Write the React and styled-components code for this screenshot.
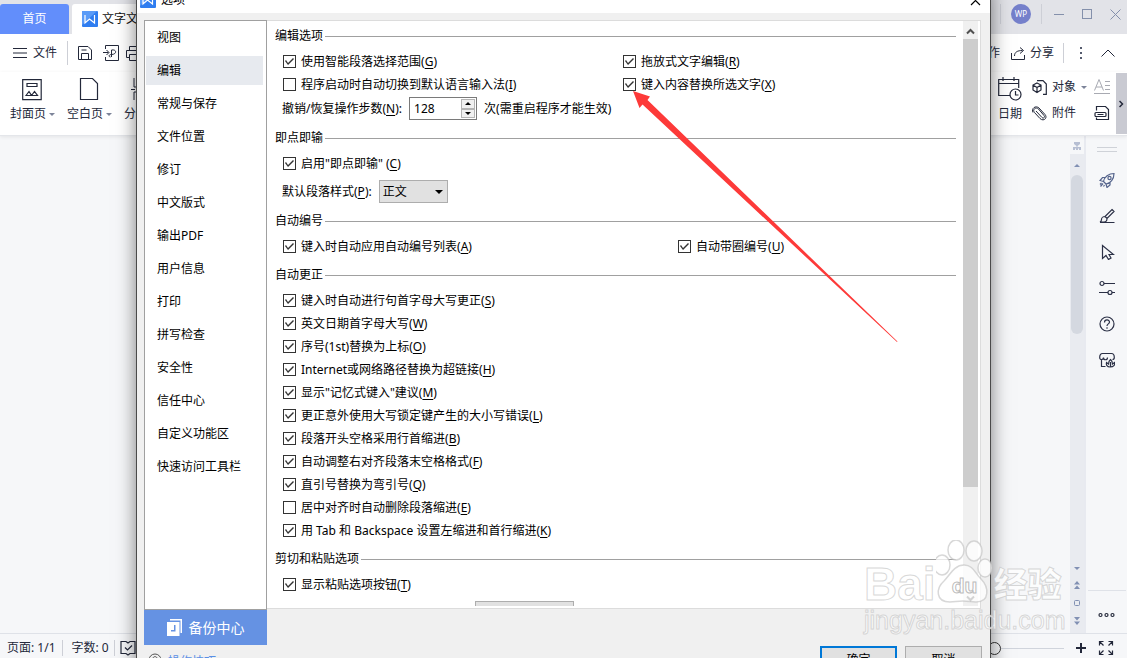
import React, { useState } from 'react';
import styled, { createGlobalStyle } from 'styled-components';

const GlobalStyle = createGlobalStyle`
  * {
    box-sizing: border-box;
  }

  body {
    margin: 0;
    overflow: hidden;
    font-family: 'Noto Sans', 'Noto Sans CJK SC', sans-serif;
    font-size: 12px;
    line-height: 18px;
    color: #23283a;
  }

  button, input, select {
    font: inherit;
    color: inherit;
    margin: 0;
  }

  svg {
    display: block;
    flex: none;
  }
`;

// Editor window
const Window = styled.div`
  position: relative;
  display: flex;
  flex-direction: column;
  height: 100vh;
  overflow: hidden;
  background: #f6f7f9;
`;

const TitleBar = styled.header`
  display: flex;
  justify-content: space-between;
  height: 34px;
  flex: none;
  background: #e2e3e8;
`;

const Tabs = styled.div`
  display: flex;
  align-items: flex-end;
  gap: 3px;
`;

const Tab = styled.button`
  display: flex;
  align-items: center;
  justify-content: center;
  gap: 4px;
  height: 30px;
  min-width: 69px;
  padding: 0 10px;
  border: none;
  border-radius: 3px 3px 0 0;
  white-space: nowrap;
  background: ${props => props.$home ? '#628efb' : '#fff'};
  color: ${props => props.$home ? '#fff' : '#111'};
`;

const WindowControls = styled.div`
  display: flex;
  align-items: center;
  height: 28px;
  margin-right: -2px;
`;

const Divider = styled.span`
  width: 1px;
  height: ${props => props.$h || 20}px;
  background: ${props => props.$color || '#cdcfd6'};
`;

const Avatar = styled.button`
  width: 20px;
  height: 20px;
  margin: 0 10px;
  padding: 0;
  border: none;
  border-radius: 50%;
  background: #7580cb;
  color: #fff;
  font-size: 8px;
  line-height: 20px;
`;

const IconButton = styled.button`
  display: flex;
  align-items: center;
  justify-content: center;
  width: ${props => props.$w || 28}px;
  height: ${props => props.$h || 24}px;
  padding: 0;
  border: none;
  background: none;
  color: ${props => props.$color || 'inherit'};
`;

const MenuBar = styled.div`
  display: flex;
  align-items: center;
  justify-content: space-between;
  height: 38px;
  flex: none;
  background: #fff;
`;

const MenuGroup = styled.div`
  display: flex;
  align-items: center;
  padding-left: ${props => props.$pad || 0}px;
`;

const TextButton = styled.button`
  display: flex;
  align-items: center;
  gap: ${props => props.$gap || 5}px;
  padding: 0;
  border: none;
  background: none;
  white-space: nowrap;
`;

const Ribbon = styled.div`
  display: flex;
  justify-content: space-between;
  height: 64px;
  flex: none;
  background: #fff;
  border-bottom: 1px solid #e4e6ea;
  box-shadow: 0 1px 4px rgba(0, 0, 0, 0.08);
  z-index: 1;
`;

const RibbonGroup = styled.div`
  display: flex;
  align-items: flex-start;
  padding-left: ${props => props.$pad || 0}px;
`;

const BigTool = styled.button`
  display: flex;
  flex-direction: column;
  align-items: center;
  width: ${props => props.$w || 57}px;
  padding: 4px 0 0;
  gap: 3px;
  border: none;
  background: none;
  white-space: nowrap;

  > svg {
    margin-right: ${props => props.$w ? 0 : 2}px;
  }

  > span {
    display: flex;
    align-items: center;
    gap: 3px;
  }
`;

const Caret = styled.span`
  border: 3px solid transparent;
  border-top-color: #7d8499;
  border-bottom: none;
`;

const ToolStack = styled.div`
  display: flex;
  flex-direction: column;
  gap: 8px;
  padding-top: 6px;
  width: ${props => props.$w}px;
`;

const RibbonScroll = styled.button`
  display: flex;
  align-items: center;
  justify-content: center;
  width: 11px;
  height: 61px;
  margin-top: 1px;
  padding: 0;
  border: none;
  background: #c9cad2;
`;

const Workspace = styled.main`
  display: flex;
  justify-content: flex-end;
  flex: 1;
  min-height: 0;
`;

const PageScroll = styled.div`
  display: flex;
  flex-direction: column;
  align-items: center;
  width: 14px;
  background: linear-gradient(#f6f7f9 18px, #e9ebf0 18px);
  padding-bottom: 3px;
`;

const PageThumb = styled.div`
  width: 12px;
  height: 159px;
  margin-top: 1px;
  border-radius: 6px;
  background: #d4d8e0;
`;

const Spacer = styled.div`
  flex: 1;
`;

const SideBar = styled.aside`
  display: flex;
  flex-direction: column;
  align-items: center;
  width: 43px;
  border-left: 2px solid #e8eaf0;
`;

const Grip = styled.div`
  width: 20px;
  height: 5px;
  margin: 11px 0 10px;
  border: solid #cfd2d8;
  border-width: 1px 0;
`;

const SideMore = styled.div`
  display: flex;
  justify-content: center;
  width: 38px;
  height: 43px;
  padding-top: 12px;
  border-top: 1px solid #dfe2e8;
`;

const StatusBar = styled.footer`
  display: flex;
  justify-content: space-between;
  height: 25px;
  flex: none;
  padding-top: 4px;
  border-top: 1px solid #dfe2e8;
  background: #f6f7f9;
`;

const StatusGroup = styled.div`
  display: flex;
  align-items: center;
  height: 20px;
  padding-left: ${props => props.$pad || 0}px;
  gap: ${props => props.$gap || 0}px;
  white-space: nowrap;
`;

const ZoomSlider = styled.input`
  appearance: none;
  width: 139px;
  height: 14px;
  background: linear-gradient(#d0d4dc, #d0d4dc) center / 100% 1px no-repeat;

  &::-webkit-slider-thumb {
    appearance: none;
    width: 13px;
    height: 13px;
    border: 1px solid #333;
    border-radius: 50%;
    background: #f6f7f9;
  }
`;

// Options dialog
const Dialog = styled.section`
  position: absolute;
  z-index: 2;
  top: -14px;
  bottom: -31px;
  left: 136px;
  right: 136px;
  display: flex;
  flex-direction: column;
  border: 1px solid #4a4a4a;
  background: #f0f0f0;
  box-shadow: 0 2px 18px rgba(0, 0, 0, 0.5);
  color: #000;
`;

const DialogTitle = styled.div`
  display: flex;
  align-items: center;
  gap: 5px;
  height: 26px;
  flex: none;
  padding: 0 8px 0 3px;
  background: #fff;
`;

const DialogBody = styled.div`
  display: flex;
  flex: 1;
  min-height: 0;
  padding: 7px 9px 0 7px;
`;

const LeftColumn = styled.div`
  display: flex;
  flex-direction: column;
  width: 123px;
  flex: none;
`;

const Nav = styled.nav`
  display: flex;
  flex-direction: column;
  gap: 4px;
  flex: 1;
  padding: 2px 3px 0 1px;
  border: 1px solid #a0a0a0;
  background: #fff;
`;

const NavItem = styled.button`
  height: 29px;
  padding: 0 11px;
  border: none;
  text-align: left;
  background: ${props => props.$active ? '#e7eaef' : 'transparent'};
`;

const BackupButton = styled.button`
  display: flex;
  align-items: center;
  justify-content: center;
  gap: 6px;
  height: 35px;
  padding: 0;
  border: none;
  background: #6592e3;
  color: #fff;
  font-size: 14px;
`;

const TipsLink = styled.a`
  display: flex;
  gap: 6px;
  height: 43px;
  padding: 8px 0 0 4px;
  color: #5a8fe6;
  text-decoration: none;
`;

const RightColumn = styled.div`
  display: flex;
  flex-direction: column;
  flex: 1;
  min-width: 0;
`;

const Panel = styled.div`
  display: flex;
  flex: 1;
  min-height: 0;
  padding: 0 2px 2px 0;
  border: 1px solid #dcdcdc;
  border-left: none;
  background: #fff;
`;

const Options = styled.div`
  display: flex;
  flex-direction: column;
  gap: 8px;
  flex: 1;
  min-width: 0;
  overflow: hidden;
  padding: 6px 7px 0 8px;
`;

const Group = styled.section`
  display: flex;
  flex-direction: column;
  flex: none;
`;

const GroupTitle = styled.h3`
  display: flex;
  align-items: center;
  gap: 2px;
  height: 18px;
  margin: 0 0 5px;
  font-size: 12px;
  font-weight: 400;
  line-height: 20px;

  &::after {
    content: '';
    flex: 1;
    height: 1px;
    background: #a0a0a0;
  }
`;

const OptionGrid = styled.div`
  display: grid;
  grid-template-columns: ${props => props.$split ? `${props.$split}px 1fr` : '1fr'};
  padding-left: 8px;
`;

const OptionLabel = styled.label`
  display: flex;
  align-items: center;
  gap: 5px;
  height: 23px;
  white-space: nowrap;
`;

const Key = styled.u`
  text-underline-offset: 2px;
`;

const CheckBox = styled.input`
  appearance: none;
  width: 13px;
  height: 13px;
  flex: none;
  border: 1px solid #333;
  background: #fff;

  &:checked::before {
    content: '';
    display: block;
    width: 11px;
    height: 11px;
    background: #333;
    clip-path: polygon(1px 5px, 2px 4px, 4px 7px, 9px 2px, 10px 3px, 4px 9px);
  }
`;

const FieldRow = styled.div`
  display: flex;
  align-items: center;
  height: 23px;
  margin: ${props => props.$top}px 0 1px 7px;
  gap: 7px;
  white-space: nowrap;
`;

const SpinBox = styled.div`
  display: flex;
  width: 68px;
  height: 23px;
  padding: 1px;
  border: 1px solid #7a7a7a;
  background: #fff;

  input {
    flex: 1;
    min-width: 0;
    padding: 0 3px;
    border: none;
    outline: none;
  }
`;

const SpinButtons = styled.div`
  display: flex;
  flex-direction: column;
  width: 14px;

  button {
    display: flex;
    align-items: center;
    justify-content: center;
    flex: 1;
    padding: 0;
    border: 1px solid #b4b4b4;
    background: #f0f0f0;
  }
`;

const SelectWrap = styled.div`
  display: grid;
  align-items: center;
  justify-items: end;

  > * {
    grid-area: 1 / 1;
  }

  svg {
    margin-right: 5px;
    pointer-events: none;
  }
`;

const Select = styled.select`
  appearance: none;
  width: 69px;
  height: 23px;
  padding: 0 3px;
  border: 1px solid #adadad;
  border-radius: 0;
  background: #e1e1e1;
`;

const PasteButton = styled.button`
  width: 99px;
  height: 24px;
  margin: 5px 0 0 200px;
  border: 1px solid #adadad;
  background: #e1e1e1;
`;

const ScrollBar = styled.div`
  display: flex;
  flex-direction: column;
  width: 15px;
  padding-top: 2px;
  background: #f0f0f0;
`;

const ScrollThumb = styled.div`
  flex: 447 0 0;
  background: #cdcdcd;
`;

const ScrollRest = styled.div`
  flex: 103 0 0;
`;

const DialogFooter = styled.div`
  display: flex;
  justify-content: flex-end;
  gap: 8px;
  height: 79px;
  flex: none;
  padding-top: 37px;
  margin-right: -1px;
`;

const DialogButton = styled.button`
  width: 77px;
  height: 28px;
  padding: 0;
  border: ${props => props.$primary ? '2px solid #0078d7' : '1px solid #adadad'};
  background: #e1e1e1;
`;

const Arrow = styled.svg`
  position: absolute;
  left: 496px;
  top: 104px;
  pointer-events: none;
`;

const Watermark = styled.div`
  position: absolute;
  z-index: 3;
  right: 61px;
  bottom: 24px;
  width: 202px;
  font-family: 'Liberation Sans', 'Noto Sans CJK SC', sans-serif;
  color: rgba(255, 255, 255, 0.75);
  -webkit-text-stroke: 1px rgba(190, 190, 190, 0.6);
  pointer-events: none;
`;

const WatermarkLogo = styled.div`
  display: flex;
  align-items: flex-end;
  font-weight: 700;
  font-size: 46px;
  line-height: 44px;

  strong:last-child {
    font-size: 34px;
    line-height: 42px;
  }
`;

const Paw = styled.div`
  display: grid;
  justify-items: center;
  align-items: end;
  width: 58px;

  > * {
    grid-area: 1 / 1;
  }

  span {
    padding-bottom: 9px;
    font-size: 21px;
    line-height: 23px;
    -webkit-text-stroke: 1px rgba(170, 170, 170, 0.8);
  }
`;

const WatermarkUrl = styled.div`
  font-size: 25px;
  line-height: 28px;
`;

const Svg = ({ w = 16, h = w, sw = 1, children, ...rest }) => (
  <svg width={w} height={h} viewBox={`0 0 ${w} ${h}`} fill="none" stroke="currentColor" strokeWidth={sw} aria-hidden="true" {...rest}>
    {children}
  </svg>
);

const WLogo = () => (
  <svg width="16" height="16" viewBox="0 0 16 16" aria-hidden="true">
    <rect width="16" height="16" rx="1" fill="#2f7df0" />
    <path d="M0 1a1 1 0 0 1 1-1h14L0 14z" fill="#5a9bf7" />
    <path d="M3 4v8l4.500-4 5 4V4" fill="none" stroke="#fff" strokeWidth="1.200" />
  </svg>
);

const Triangle = ({ up, w = 6, h = 3 }) => (
  <svg width={w} height={h} viewBox="0 0 6 3" preserveAspectRatio="none" aria-hidden="true">
    <path d={up ? 'M3 0l3 3H0z' : 'M0 0h6L3 3z'} fill="currentColor" />
  </svg>
);

const sideTools = [
  ['火箭', '#55648c', <><path d="M4.500 9.500C5 5 10 1.500 15 1.500 15 7 11.500 11.500 7 12zM6.500 5.500H3.500L1 8.500l3.500 1M11 10v3L8 15.500l-1-3.500M4 11.500L1.500 14.500M2.500 11L1 12.500M5.500 13L4.500 14.500" /><circle cx="10.500" cy="6" r="1.600" /></>],
  ['样式', '#2b3046', <path d="M13 1.500l2 2L8 10.500 6 8.500zM6 8.500c-2 0-3.500 1.500-3.500 3 0 1-.5 2-1.500 2.500h4c2 0 3-1.500 3-3.500M1 14.500h14.500" />],
  ['选择', '#2b3046', <path d="M3.500 1.500v13l3.500-3 2.500 4 2.500-1.500-2-3.500h4.500z" />],
  ['属性', '#2b3046', <><circle cx="3" cy="3.500" r="2" /><path d="M5 3.500h11M0 12.500h9M13 12.500h3" /><circle cx="11" cy="12.500" r="2" /></>],
  ['帮助', '#2b3046', <><circle cx="8" cy="8" r="7" /><path d="M5.500 6.500C5.500 3 10.500 3.200 10.500 6 10.500 8 8 7.800 8 10M8 11.200v1.500" /></>],
  ['商城', '#2b3046', <><path d="M6.500 14.500H2.500V7.500M.7 5.500C.7 3 1.500 1.500 3.500 1.500h9c2 0 2.800 1.500 2.800 4 0 1-.8 2-1.800 2M.7 5.500c0 3 3.800 2.500 3.800 0 0 3 4 3 4 0" /><path d="M11 15c-3 0-4-2-3.500-4.500l2 1.500c0-2 .7-3.500 2-4.500 1.300 1 2 2.500 2 4.500l2-1.500C16 13 15 15 11 15zM11.500 15v-5" /></>],
];

const navItems = [
  '视图', '编辑', '常规与保存', '文件位置', '修订', '中文版式', '输出PDF', '用户信息',
  '打印', '拼写检查', '安全性', '信任中心', '自定义功能区', '快速访问工具栏',
];

const corrections = [
  ['键入时自动进行句首字母大写更正', 'S', true],
  ['英文日期首字母大写', 'W', true],
  ['序号(1st)替换为上标', 'O', true],
  ['Internet或网络路径替换为超链接', 'H', true],
  ['显示"记忆式键入"建议', 'M', true],
  ['更正意外使用大写锁定键产生的大小写错误', 'L', true],
  ['段落开头空格采用行首缩进', 'B', true],
  ['自动调整右对齐段落末空格格式', 'F', true],
  ['直引号替换为弯引号', 'Q', true],
  ['居中对齐时自动删除段落缩进', 'E', false],
  ['用 Tab 和 Backspace 设置左缩进和首行缩进', 'K', true],
];

const Option = ({ text, hotkey, checked = true }) => (
  <OptionLabel>
    <CheckBox type="checkbox" defaultChecked={checked} />
    <span>{text}(<Key>{hotkey}</Key>)</span>
  </OptionLabel>
);

const OptionsDialog = () => {
  const [active, setActive] = useState('编辑');
  const [steps, setSteps] = useState(128);

  return (
    <Dialog role="dialog" aria-label="选项">
      <DialogTitle>
        <WLogo />
        <span>选项</span>
        <Spacer />
        <IconButton $w={14} aria-label="关闭">
          <Svg w={11} sw={1.2}><path d="M1 1l9 9M10 1l-9 9" /></Svg>
        </IconButton>
      </DialogTitle>
      <DialogBody>
        <LeftColumn>
          <Nav>
            {navItems.map(item => (
              <NavItem key={item} $active={item === active} onClick={() => setActive(item)}>{item}</NavItem>
            ))}
          </Nav>
          <BackupButton>
            <svg width="16" height="18" viewBox="0 0 16 18" aria-hidden="true">
              <path d="M3 0h12v14h-1.500V1.500H3z" fill="#fff" />
              <path d="M0 3h12.500v14H0zM7 6v5H4v1.500h4.500V6z" fill="#fff" fillRule="evenodd" />
            </svg>
            备份中心
          </BackupButton>
          <TipsLink href="#">
            <Svg w={14} color="#555"><circle cx="7" cy="7" r="6" /><path d="M5 5.500C5 3 9 3 9 5.500 9 7 7 7 7 8.500M7 9.500v1" /></Svg>
            操作技巧
          </TipsLink>
        </LeftColumn>
        <RightColumn>
          <Panel>
            <Options>
              <Group>
                <GroupTitle>编辑选项</GroupTitle>
                <OptionGrid $split={340}>
                  <Option text="使用智能段落选择范围" hotkey="G" />
                  <Option text="拖放式文字编辑" hotkey="R" />
                  <Option text="程序启动时自动切换到默认语言输入法" hotkey="I" checked={false} />
                  <Option text="键入内容替换所选文字" hotkey="X" />
                </OptionGrid>
                <FieldRow $top={1}>
                  <label htmlFor="undo-steps">撤销/恢复操作步数(<Key>N</Key>):</label>
                  <SpinBox>
                    <input id="undo-steps" type="text" value={steps} onChange={e => setSteps(Number(e.target.value) || 0)} />
                    <SpinButtons>
                      <button aria-label="增加" onClick={() => setSteps(steps + 1)}><Triangle up /></button>
                      <button aria-label="减少" onClick={() => setSteps(steps - 1)}><Triangle /></button>
                    </SpinButtons>
                  </SpinBox>
                  <span>次(需重启程序才能生效)</span>
                </FieldRow>
              </Group>

              <Group>
                <GroupTitle>即点即输</GroupTitle>
                <OptionGrid>
                  <Option text={'启用"即点即输" '} hotkey="C" />
                </OptionGrid>
                <FieldRow $top={5}>
                  <label htmlFor="para-style">默认段落样式(<Key>P</Key>):</label>
                  <SelectWrap>
                    <Select id="para-style">
                      <option>正文</option>
                    </Select>
                    <Triangle w={8} h={4} />
                  </SelectWrap>
                </FieldRow>
              </Group>

              <Group>
                <GroupTitle>自动编号</GroupTitle>
                <OptionGrid $split={395}>
                  <Option text="键入时自动应用自动编号列表" hotkey="A" />
                  <Option text="自动带圈编号" hotkey="U" />
                </OptionGrid>
              </Group>

              <Group>
                <GroupTitle>自动更正</GroupTitle>
                <OptionGrid>
                  {corrections.map(([text, hotkey, checked]) => (
                    <Option key={hotkey} text={text} hotkey={hotkey} checked={checked} />
                  ))}
                </OptionGrid>
              </Group>

              <Group>
                <GroupTitle>剪切和粘贴选项</GroupTitle>
                <OptionGrid>
                  <Option text="显示粘贴选项按钮" hotkey="T" />
                </OptionGrid>
                <PasteButton aria-label="粘贴设置" />
              </Group>
            </Options>
            <ScrollBar>
              <IconButton $w={15} $h={16} $color="#505050" aria-label="向上滚动">
                <Svg w={9} h={7} sw={2}><path d="M1 5.500l3.500-3.500L8 5.500" /></Svg>
              </IconButton>
              <ScrollThumb />
              <ScrollRest />
              <IconButton $w={15} $h={16} $color="#505050" aria-label="向下滚动">
                <Svg w={9} h={7} sw={2}><path d="M1 1.500L4.500 5 8 1.500" /></Svg>
              </IconButton>
            </ScrollBar>
          </Panel>
          <DialogFooter>
            <DialogButton $primary>确定</DialogButton>
            <DialogButton>取消</DialogButton>
          </DialogFooter>
        </RightColumn>
      </DialogBody>
      <Arrow width="268" height="254" viewBox="0 0 268 254" aria-hidden="true">
        <path d="M0 0l17 5.500-2.500 3.500L264.500 250.500 264 251 9.500 13.500 6.500 17z" fill="#fd3a39" />
      </Arrow>
    </Dialog>
  );
};

const App = () => (
  <>
    <GlobalStyle />
    <Window>
      <TitleBar>
        <Tabs>
          <Tab $home>首页</Tab>
          <Tab><WLogo />文字文稿1</Tab>
        </Tabs>
        <WindowControls>
          <Divider />
          <Avatar>WP</Avatar>
          <Divider />
          <MenuGroup $pad={3}>
            <IconButton $color="#8490ab" aria-label="最小化"><Svg w={11}><path d="M0 5.500h10" /></Svg></IconButton>
            <IconButton $color="#8490ab" aria-label="最大化"><Svg w={11}><rect x=".5" y=".5" width="9" height="9" /></Svg></IconButton>
            <IconButton $color="#8490ab" aria-label="关闭窗口"><Svg w={11}><path d="M.5.500l10 10M10.500.500l-10 10" /></Svg></IconButton>
          </MenuGroup>
        </WindowControls>
      </TitleBar>

      <MenuBar>
        <MenuGroup $pad={13}>
          <TextButton $gap={6}>
            <Svg w={14} h={10}><path d="M0 .5h14M0 5h14M0 9.500h14" /></Svg>
            文件
          </TextButton>
          <MenuGroup $pad={10}>
            <Divider $h={24} />
          </MenuGroup>
          <MenuGroup $pad={4}>
            <IconButton $w={26} aria-label="保存">
              <Svg><path d="M1.500 1.500h9.500l3.500 3.500v9.500h-13zM4.500 14.500v-6h7v6M4.500 5h5" /></Svg>
            </IconButton>
            <IconButton $w={26} aria-label="输出为PDF">
              <Svg><path d="M2.500 4V.5h13v15h-13V12M0 7.500h5.500M3.500 5L6 7.500 3.500 10M8.500 12V5c5.500-1 5.500 4.500 0 4.500-3 0-3 2.500-1 2.500" /></Svg>
            </IconButton>
            <IconButton $w={20} aria-label="打印">
              <Svg><path d="M3.500 5V1.500h9V5M3 12.500H.5v-7h15v7H13M3.500 9.500h9v6h-9z" /></Svg>
            </IconButton>
          </MenuGroup>
        </MenuGroup>
        <MenuGroup>
          <TextButton>协作</TextButton>
          <MenuGroup $pad={11}>
            <TextButton>
              <Svg w={14} h={13}><path d="M.5 6v6.500h13V8M3.500 9c0-4 3-5.500 8-5.500M9 .500l3.500 3-3.500 3" /></Svg>
              分享
            </TextButton>
          </MenuGroup>
          <MenuGroup $pad={9}>
            <Divider />
            <IconButton $w={34} aria-label="更多">
              <svg width="3" height="14" fill="#555b6e"><path d="M0 1h2v2H0zM0 6h2v2H0zM0 11h2v2H0z" /></svg>
            </IconButton>
            <IconButton $w={20} aria-label="折叠功能区">
              <Svg w={14} h={8}><path d="M.5 7.500L7 1l6.500 6.500" /></Svg>
            </IconButton>
          </MenuGroup>
          <MenuGroup $pad={9} />
        </MenuGroup>
      </MenuBar>

      <Ribbon>
        <RibbonGroup $pad={4}>
          <BigTool>
            <Svg w={20} h={26}><path d="M.7 3.700h18.500v20H.7zM5 7.500h10v3H5zM4 19.500l3-4 2.500 4zM9.500 19.500l3-4 3 4z" strokeWidth="1.200" /></Svg>
            <span>封面页<Caret /></span>
          </BigTool>
          <BigTool>
            <Svg w={20} h={26}><path d="M1.500 2.500h12l5 5v16h-17z" strokeWidth="1.200" /></Svg>
            <span>空白页<Caret /></span>
          </BigTool>
          <BigTool $w={45}>
            <Svg w={20} h={26}><path d="M3 2v9h14V2M3 24v-8h14v8M0 13.500h4M7 13.500h6M16 13.500h4" /></Svg>
            <span>分页<Caret /></span>
          </BigTool>
        </RibbonGroup>
        <RibbonGroup>
          <BigTool $w={24}>
            <Svg w={24} h={26}><path d="M12 19.500H.7v-16h20V12M.7 7.500h20M5 1v4M16 1v4" strokeWidth="1.200" /><circle cx="17.500" cy="18.500" r="5.500" strokeWidth="1.200" /><path d="M17.500 15v4h3" strokeWidth="1.200" /></Svg>
            <span>日期</span>
          </BigTool>
          <RibbonGroup $pad={10}>
            <ToolStack $w={62}>
              <TextButton>
                <Svg w={15}><path d="M5 .700h6l3.300 3.300v10.300H11M5 3l4 2v5l-4 2.500L1 10V5zM1 5l4 2.500L9 5M5 7.500v5" strokeWidth="1.200" /></Svg>
                对象<Caret />
              </TextButton>
              <TextButton>
                <Svg w={15}><path d="M4 5l6 6.500c1.500 1.500 3.500-.500 2-2L6.500 3C4 .500 0 3.500 2.500 6.500l5.500 6c3.500 3.500 8-.5 5-4L7 2C3.500-1-1 2.500 1 6.500" /></Svg>
                附件
              </TextButton>
            </ToolStack>
            <ToolStack $w={22}>
              <IconButton $w={16} $h={18} $color="#a8aab2" aria-label="首字下沉">
                <Svg w={17}><path d="M.5 11.500L5 .500l4.500 11M2 8h6M11 2.500h5M11 6.500h5M11 10.500h5M0 14.500h16" /></Svg>
              </IconButton>
              <IconButton $w={16} $h={18} aria-label="文档部件">
                <Svg w={16}><path d="M2.500 5.500v-4h9l3 3v10h-12v-2" strokeWidth="1.200" /><rect x="1" y="7.500" width="11" height="4" rx="1" strokeWidth="1.200" /><path d="M3.500 9.500h6" /></Svg>
              </IconButton>
            </ToolStack>
          </RibbonGroup>
          <RibbonScroll aria-label="展开">
            <Svg w={5} h={8} sw={1.5}><path d="M.5 1l3 3-3 3" /></Svg>
          </RibbonScroll>
        </RibbonGroup>
      </Ribbon>

      <Workspace>
        <PageScroll>
          <IconButton $w={14} $h={20} $color="#b7bfd3" aria-label="标尺">
            <Svg w={8} h={8}><path d="M1 0h6v2L4.500 4v1H8v3H6V6.500H5V8H3V6.500H2V8H0V5h3.500V4L1 2z" fill="currentColor" stroke="none" /></Svg>
          </IconButton>
          <IconButton $w={14} $h={18} $color="#8190b3" aria-label="向上"><Triangle up /></IconButton>
          <PageThumb />
          <Spacer />
          <IconButton $w={14} $h={16} $color="#8190b3" aria-label="向下"><Triangle /></IconButton>
          <IconButton $w={14} $h={18} $color="#8190b3" aria-label="上一页"><Svg w={6} h={8}><path d="M3 0l3 3.500H0zM3 4.500L6 8H0z" fill="currentColor" stroke="none" /></Svg></IconButton>
          <IconButton $w={14} $h={18} $color="#8190b3" aria-label="选择浏览对象"><Svg w={6}><rect x=".5" y=".5" width="5" height="5" rx="1" /></Svg></IconButton>
          <IconButton $w={14} $h={18} $color="#8190b3" aria-label="下一页"><Svg w={6} h={8}><path d="M0 0h6L3 3.500zM0 4.500h6L3 8z" fill="currentColor" stroke="none" /></Svg></IconButton>
        </PageScroll>
        <SideBar>
          <Grip />
          {sideTools.map(([label, color, icon]) => (
            <IconButton key={label} $w={36} $h={36} $color={color} aria-label={label}>
              <Svg sw={1.2}>{icon}</Svg>
            </IconButton>
          ))}
          <Spacer />
          <SideMore>
            <IconButton $h={24} aria-label="更多工具">
              <Svg w={17} h={6} sw={1.2}><circle cx="2.500" cy="3" r="1.500" /><circle cx="8.500" cy="3" r="1.500" /><circle cx="14.500" cy="3" r="1.500" /></Svg>
            </IconButton>
          </SideMore>
        </SideBar>
      </Workspace>

      <StatusBar>
        <StatusGroup $pad={7} $gap={6}>
          <span>页面: 1/1</span>
          <Divider $h={16} />
          <StatusGroup $pad={3} $gap={5}>
            <span>字数: 0</span>
            <Divider $h={16} />
            <Svg><path d="M6 1.500H1v12h5l2 1.500 2-1.500h5v-12h-5L8 3 6 1.500M5 7.500l2.500 2.500L12 5.500" strokeWidth="1.200" /></Svg>
          </StatusGroup>
        </StatusGroup>
        <StatusGroup>
          <ZoomSlider type="range" min="0" max="100" defaultValue="50" aria-label="缩放" />
          <IconButton $w={34} $h={20} aria-label="放大"><Svg w={10} sw={2}><path d="M5 0v10M0 5h10" /></Svg></IconButton>
          <IconButton $w={16} $h={20} aria-label="全屏">
            <Svg w={16} sw={1.2}><path d="M1.500 5.500v-4h4M1.500 1.500l4 4M10.500 1.500h4v4M14.500 1.500l-4 4M1.500 10.500v4h4M1.500 14.500l4-4M14.500 10.500v4h-4M14.500 14.500l-4-4" /></Svg>
          </IconButton>
          <MenuGroup $pad={13} />
        </StatusGroup>
      </StatusBar>

      <OptionsDialog />

      <Watermark aria-hidden="true">
        <WatermarkLogo>
          <strong>Bai</strong>
          <Paw>
            <svg width="58" height="66" viewBox="0 0 58 66" fill="rgba(255,255,255,0.75)" stroke="rgba(190,190,190,0.6)" strokeWidth="1.500">
              <ellipse cx="6" cy="25" rx="8" ry="10" />
              <ellipse cx="20" cy="10" rx="8" ry="10" />
              <ellipse cx="38" cy="11" rx="8" ry="10" />
              <ellipse cx="49" cy="28" rx="7" ry="9" />
              <path d="M28 25c9 0 11 8 17 14 8 8 9 23-5 23-5 0-7-1-13-1s-8 1-13 1C-1 62 0 48 8 41c6-6 10-16 20-16z" />
            </svg>
            <span>du</span>
          </Paw>
          <strong>经验</strong>
        </WatermarkLogo>
        <WatermarkUrl>jingyan.baidu.com</WatermarkUrl>
      </Watermark>
    </Window>
  </>
);

export default App;
